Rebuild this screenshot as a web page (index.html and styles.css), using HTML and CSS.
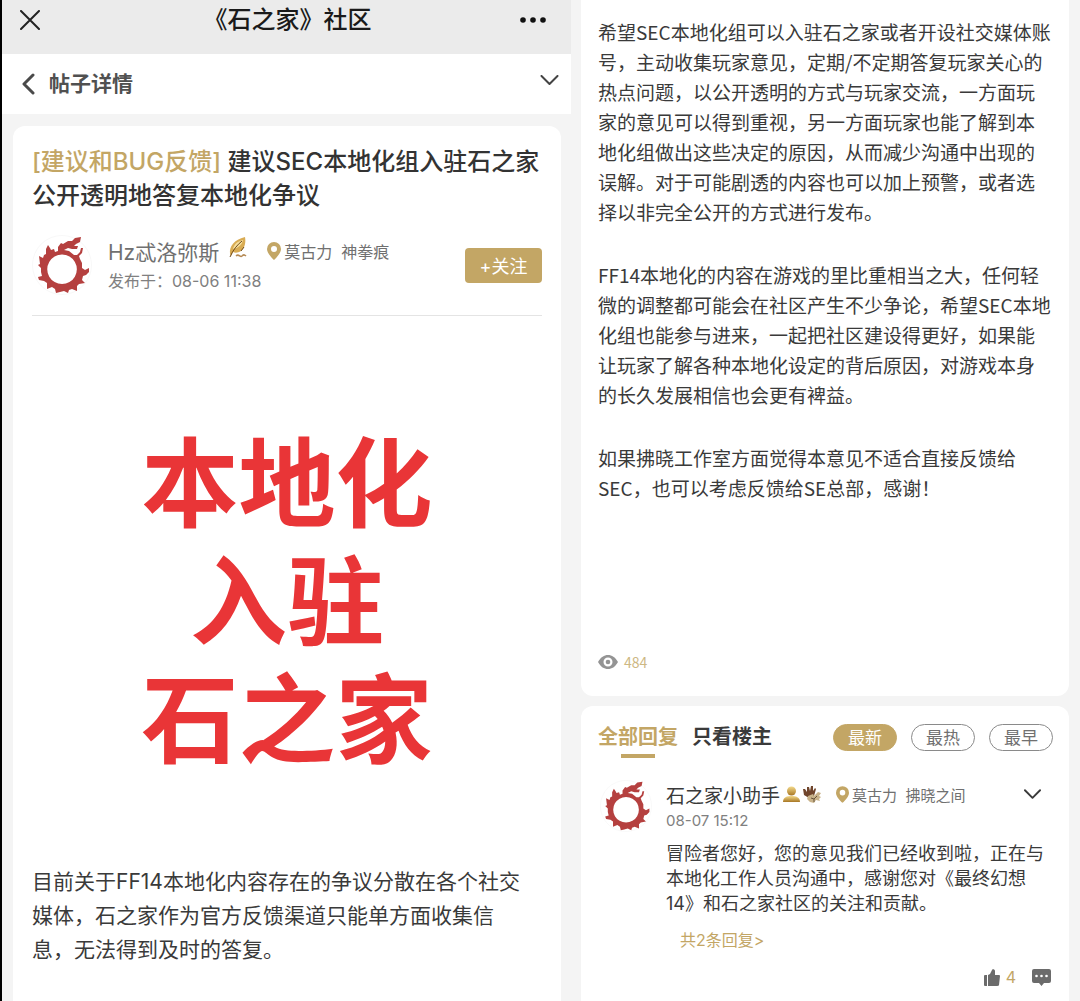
FILE: index.html
```html
<!DOCTYPE html>
<html lang="zh-CN">
<head>
<meta charset="utf-8">
<meta name="viewport" content="width=device-width, initial-scale=1">
<title>《石之家》社区</title>
<link rel="stylesheet" href="styles.css">
</head>
<body>
<svg class="defs" aria-hidden="true">
  <symbol id="crest" viewBox="0 0 60 60">
    <circle cx="30" cy="30" r="29.500" fill="#fff" stroke="#f8f8f8"/>
    <path fill="#b5403f" fill-rule="evenodd" d="M7 21l4 2 1-3 2-1 0-5 2-4 2 3 1 2 3-1 1 3 3-1 0-4 3-4 2 1 5-3 4 0 3-3 6-1-1 5-4 2-2 2 4 0-1 3-5 0-4-1-4 2 5 1 5 4 3 0 3-3 1-4 2 0-1 5-3 3 1 3 2 4 0 5 3 2 4-2 0 4-3 3-3 1-1 4 3 3-6 1-2 2 0 5-5-2-3 1-1 3-4-2-4 1-4 1-1-4-3-2-5 2 0-6-3-2-5-1-1-3 4-1-1-4 0-4-3-3 2-1zM30 19.500a14.800 14.800 0 1 0 .1 0z"/>
  </symbol>
  <symbol id="pin" viewBox="0 0 14 18">
    <path fill="#c3a665" fill-rule="evenodd" d="M7 0a7 7 0 0 1 7 7c0 4-4 8-7 11C4 15 0 11 0 7a7 7 0 0 1 7-7zm0 4a3 3 0 1 0 0 6 3 3 0 0 0 0-6z"/>
  </symbol>
  <symbol id="down" viewBox="0 0 18 11">
    <path fill="none" stroke="currentColor" stroke-width="2" stroke-linecap="round" stroke-linejoin="round" d="M1 1l8 8 8-8"/>
  </symbol>
</svg>
<div class="page">
  <main class="post">
    <header class="titlebar">
      <button class="icon-btn" aria-label="关闭"><svg width="20" height="20" viewBox="0 0 20 20"><path fill="none" stroke="#222" stroke-width="2" stroke-linecap="round" d="M1 1l18 18M19 1L1 19"/></svg></button>
      <h1 class="app-name">《石之家》社区</h1>
      <button class="icon-btn" aria-label="更多"><svg width="28" height="6" viewBox="0 0 28 6"><g fill="#111"><circle cx="4" cy="3" r="2.800"/><circle cx="14" cy="3" r="2.800"/><circle cx="24" cy="3" r="2.800"/></g></svg></button>
    </header>
    <nav class="subbar">
      <button class="icon-btn" aria-label="返回"><svg width="13" height="22" viewBox="0 0 13 22"><path fill="none" stroke="#4a4a4a" stroke-width="3" stroke-linecap="round" stroke-linejoin="round" d="M11 2l-9 9 9 9"/></svg></button>
      <span class="subbar-title">帖子详情</span>
      <button class="icon-btn" aria-label="展开"><svg width="19" height="11"><use href="#down"/></svg></button>
    </nav>
    <article class="card post-card">
      <h2 class="post-title"><span class="tag">[建议和BUG反馈]</span> 建议SEC本地化组入驻石之家公开透明地答复本地化争议</h2>
      <div class="author">
        <svg class="avatar" width="60" height="60"><use href="#crest"/></svg>
        <div class="who">
          <div class="who-line">
            <span class="name">Hz忒洛弥斯</span>
            <svg class="quill" width="18" height="22" viewBox="0 0 18 22"><path fill="#d9ac54" d="M1 17C0 9 5 3 16 0c1 5 0 11-4 14-3 2-6 2-8 1l-2 4z"/><path fill="#f6df9d" d="M4 12c1-5 5-8 10-9-1 5-5 8-10 9z"/><path fill="none" stroke="#6f4a1d" stroke-width="1" d="M1 20C4 13 8 8 13 4M12 14l3-4"/><path fill="none" stroke="#b58a55" stroke-width="1.500" d="M7 19c3-3 4 2 6 0s3-1 4 0"/></svg>
            <span class="place"><svg width="14" height="18"><use href="#pin"/></svg>莫古力&nbsp; 神拳痕</span>
          </div>
          <time class="date">发布于：08-06 11:38</time>
        </div>
        <button class="follow">+关注</button>
      </div>
      <p class="poster">本地化<br>入驻<br>石之家</p>
      <p class="lead">目前关于FF14本地化内容存在的争议分散在各个社交媒体，石之家作为官方反馈渠道只能单方面收集信息，无法得到及时的答复。</p>
    </article>
  </main>
  <section class="side">
    <div class="card body-card">
      <p>希望SEC本地化组可以入驻石之家或者开设社交媒体账号，主动收集玩家意见，定期/不定期答复玩家关心的热点问题，以公开透明的方式与玩家交流，一方面玩家的意见可以得到重视，另一方面玩家也能了解到本地化组做出这些决定的原因，从而减少沟通中出现的误解。对于可能剧透的内容也可以加上预警，或者选择以非完全公开的方式进行发布。</p>
      <p>FF14本地化的内容在游戏的里比重相当之大，任何轻微的调整都可能会在社区产生不少争论，希望SEC本地化组也能参与进来，一起把社区建设得更好，如果能让玩家了解各种本地化设定的背后原因，对游戏本身的长久发展相信也会更有裨益。</p>
      <p>如果拂晓工作室方面觉得本意见不适合直接反馈给SEC，也可以考虑反馈给SE总部，感谢！</p>
      <div class="views"><svg width="20" height="14" viewBox="0 0 20 14"><path fill="#949494" fill-rule="evenodd" d="M0 7C3 2 6 0 10 0s7 2 10 7c-3 5-6 7-10 7S3 12 0 7zm10-4.500a4.500 4.500 0 1 0 0 9 4.500 4.500 0 0 0 0-9z"/><circle cx="10" cy="7" r="2.300" fill="#949494"/></svg>484</div>
    </div>
    <div class="card replies" id="replies">
      <div class="filters">
        <button class="tab active">全部回复</button>
        <button class="tab">只看楼主</button>
        <div class="sorts">
          <button class="pill on">最新</button>
          <button class="pill">最热</button>
          <button class="pill">最早</button>
        </div>
      </div>
      <article class="reply">
        <svg class="avatar" width="52" height="52"><use href="#crest"/></svg>
        <div class="reply-main">
          <div class="reply-head">
            <span class="reply-name">石之家小助手</span>
            <svg width="17" height="17" viewBox="0 0 17 17"><defs><linearGradient id="gold" x2="0" y2="1"><stop stop-color="#f3d98a"/><stop offset="1" stop-color="#a87724"/></linearGradient></defs><circle cx="8.500" cy="5" r="4.500" fill="url(#gold)"/><path fill="url(#gold)" d="M0 16c0-5 4-6 8.500-6S17 11 17 16z"/></svg>
            <svg width="18" height="17" viewBox="0 0 18 17"><path fill="#70452c" d="M0 3l2 0 2 3V1h2l1 4 1-5h2v5l2-3 1 1-2 7-5 2-5-3z"/><path fill="#c9b38a" d="M5 10l5-2 1 2 4-4 3 1-2 3 2 1-2 2 1 2-4-1-2 3-4-1-3-3z"/><path fill="none" stroke="#66523b" d="M8 12l3 1 3-3M11 13l0 3"/></svg>
            <span class="place small"><svg width="13" height="17"><use href="#pin"/></svg>莫古力&nbsp; 拂晓之间</span>
            <button class="icon-btn more" aria-label="展开"><svg width="17" height="11"><use href="#down"/></svg></button>
          </div>
          <time class="reply-date">08-07 15:12</time>
          <p class="reply-text">冒险者您好，您的意见我们已经收到啦，正在与本地化工作人员沟通中，感谢您对《最终幻想14》和石之家社区的关注和贡献。</p>
          <a class="thread" href="#replies">共2条回复&gt;</a>
          <div class="actions">
            <button class="act" aria-label="点赞 4"><svg width="16" height="17" viewBox="0 0 16 17"><path fill="#6b6b6b" d="M1 6h2v11H1a1 1 0 0 1-1-1V7a1 1 0 0 1 1-1zM4 6l2-1 2-4c0-1 3-1 3 1v4h4q1 0 1 1l-1 9q0 1-2 1H4z"/></svg><span>4</span></button>
            <button class="act" aria-label="评论"><svg width="19" height="17" viewBox="0 0 19 17"><path fill="#6b6b6b" d="M2 0h15a2 2 0 0 1 2 2v10a2 2 0 0 1-2 2h-5l-2.500 3L7 14H2a2 2 0 0 1-2-2V2a2 2 0 0 1 2-2z"/><g fill="#fff"><circle cx="4.500" cy="7" r="1.300"/><circle cx="9.500" cy="7" r="1.300"/><circle cx="14.500" cy="7" r="1.300"/></g></svg></button>
          </div>
        </div>
      </article>
    </div>
  </section>
</div>
</body>
</html>
```
FILE: styles.css
```css
* { box-sizing: border-box; }
body {
  margin: 0;
  background: #f4f4f4;
  color: #3a3a3a;
  font-family: Inter, "Noto Sans CJK SC", "Noto Sans", sans-serif;
}
h1, h2, p { margin: 0; }
button {
  margin: 0;
  padding: 0;
  border: 0;
  background: none;
  color: inherit;
  font: inherit;
}
svg { display: block; flex: none; }
.defs { position: absolute; width: 0; height: 0; }
.page {
  display: grid;
  grid-template-columns: 569fr 509fr;
  min-height: 100vh;
  border-left: 2px solid #000;
}
.post, .side { display: flex; flex-direction: column; }
.card { background: #fff; border-radius: 12px; }

.titlebar {
  display: flex;
  align-items: center;
  height: 54px;
  padding: 0 24px 14px 18px;
  background: #ebebeb;
}
.app-name {
  flex: 1;
  padding-left: 16px;
  color: #1a1a1a;
  font-size: 24px;
  line-height: 36px;
  font-weight: 500;
  text-align: center;
}
.subbar {
  display: flex;
  align-items: center;
  gap: 14px;
  height: 60px;
  padding: 0 12px 0 20px;
  background: #fff;
}
.subbar-title { flex: 1; font-size: 21px; line-height: 30px; font-weight: 700; color: #505050; }
.subbar .icon-btn:last-child { padding-bottom: 8px; color: #444; }

.post-card {
  flex: 1;
  margin: 12px 10px 0 11px;
  padding: 19px 19px 32px;
  border-radius: 12px 12px 0 0;
}
.post-title { font-size: 24px; line-height: 34px; font-weight: 500; color: #333; }
.tag { color: #c3a665; }
.author {
  display: flex;
  align-items: center;
  gap: 16px;
  margin-top: 22px;
  padding-bottom: 20px;
  border-bottom: 1px solid #e4e4e4;
}
.who { flex: 1; color: #707070; }
.who-line { display: flex; align-items: center; height: 32px; }
.name { font-size: 21px; }
.quill { margin: 0 20px 6px 10px; }
.place { display: flex; align-items: center; gap: 3px; font-size: 16px; color: #707070; }
.date { display: block; font-size: 16px; line-height: 28px; color: #808080; }
.follow {
  width: 77px;
  height: 35px;
  border-radius: 4px;
  background: #c3a665;
  color: #fff;
  font-size: 18px;
}
.poster {
  padding: 102px 0 93px;
  color: #e93537;
  font-family: "Noto Sans CJK SC", sans-serif;
  font-size: 97px;
  line-height: 118px;
  font-weight: 700;
  text-align: center;
}
.lead { padding-right: 8px; font-size: 21px; line-height: 34px; }

.side { gap: 10px; padding: 0 11px 0 10px; }
.body-card {
  display: flex;
  flex-direction: column;
  gap: 33px;
  padding: 17px 16px 21px 17px;
  border-radius: 0 0 12px 12px;
  font-family: "Noto Sans CJK SC", "Noto Sans", sans-serif;
  font-size: 19px;
  line-height: 30px;
}
.views {
  display: flex;
  align-items: center;
  gap: 6px;
  margin-top: 113px;
  color: #cdb883;
  font-size: 14px;
  line-height: 26px;
}
.replies { flex: 1; padding: 14px 16px 12px 17px; border-radius: 12px 12px 0 0; }
.filters { display: flex; align-items: flex-start; gap: 14px; }
.tab {
  display: flex;
  flex-direction: column;
  align-items: center;
  font-size: 20px;
  line-height: 34px;
  font-weight: 700;
}
.active { color: #c3a665; }
.active::after { content: ""; width: 34px; height: 4px; background: #c3a665; }
.sorts { display: flex; gap: 14px; margin: 4px 0 0 auto; }
.pill {
  width: 64px;
  height: 27px;
  border: 1px solid #8a8a8a;
  border-radius: 14px;
  color: #707070;
  font-size: 17px;
  line-height: 24px;
}
.on { border-color: #c3a665; background: #c3a665; color: #fff; }

.reply { display: flex; gap: 14px; margin-top: 22px; padding-left: 2px; }
.reply-main { flex: 1; }
.reply-head { display: flex; align-items: center; gap: 3px; height: 28px; }
.reply-name { font-size: 19px; }
.small { margin-left: 12px; font-size: 15px; }
.more { margin: 0 12px 0 auto; }
.reply-date { display: block; font-size: 15px; line-height: 26px; color: #808080; }
.reply-text { margin-top: 7px; padding-right: 8px; font-size: 18px; line-height: 25px; }
.thread {
  display: inline-block;
  margin: 12px 0 0 14px;
  color: #c3a665;
  font-size: 16px;
  line-height: 24px;
  text-decoration: none;
}
.actions { display: flex; justify-content: flex-end; gap: 16px; margin-top: 12px; padding-right: 2px; }
.act { display: flex; align-items: center; gap: 6px; height: 26px; color: #c3a665; font-size: 16px; }
```
